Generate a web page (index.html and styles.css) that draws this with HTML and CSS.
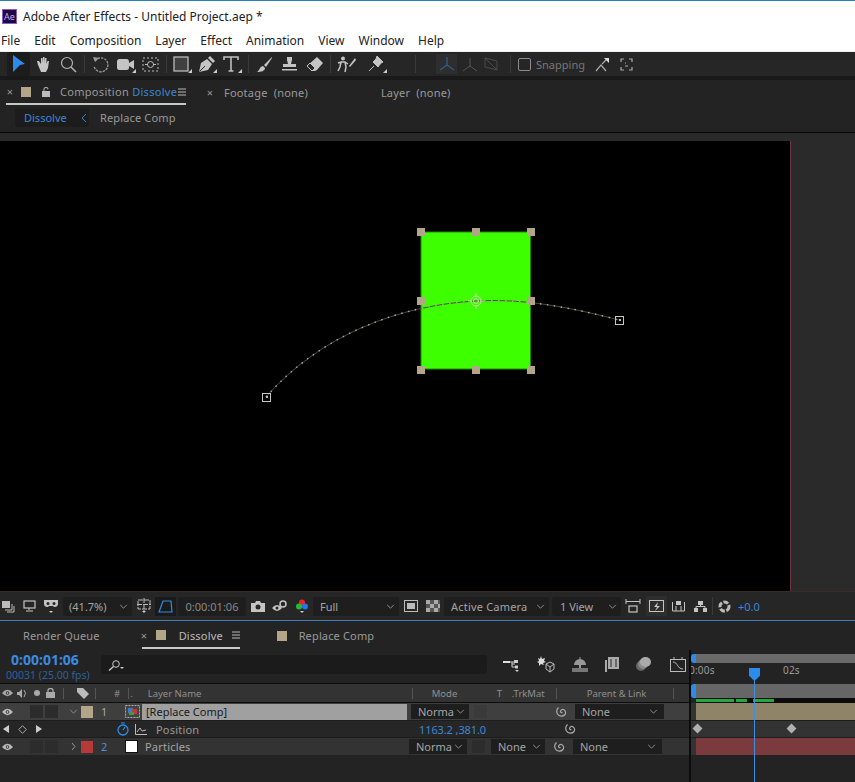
FILE: index.html
```html
<!DOCTYPE html>
<html lang="en">
<head>
    <meta charset="UTF-8">
    <meta name="viewport" content="width=device-width, initial-scale=1.0">
    <title>Adobe After Effects</title>
    <link rel="stylesheet" href="styles.css">
</head>
<body>

<!-- shared icons -->
<svg class="defs" width="0" height="0">
    <symbol id="chev" viewBox="0 0 10 6"><path d="M1 1l4 4 4-4" fill="none" stroke="currentColor"/></symbol>
    <symbol id="spiral" viewBox="0 0 14 14"><path d="M7.5 7.5a1.3 1.3 0 0 1-2-1 2.5 2.5 0 0 1 3-2 3.4 3.4 0 0 1 1.5 5 4.6 4.6 0 0 1-7.500-.500 5.400 5.400 0 0 1 1-6.500" fill="none" stroke="currentColor" stroke-width="1.200"/></symbol>
    <symbol id="eye" viewBox="0 0 12 8"><path d="M0 4q6-7 12 0q-6 7-12 0z" fill="currentColor"/><circle cx="6" cy="4" r="2" fill="#333"/><circle cx="6" cy="4" r="1" fill="currentColor"/></symbol>
    <symbol id="lines" viewBox="0 0 8 8"><path d="M0 1h8M0 4h8M0 7h8" stroke="currentColor"/></symbol>
    <symbol id="corner" viewBox="0 0 4 4"><path d="M4 0v4H0z" fill="currentColor"/></symbol>
</svg>

<div class="titlebar">
    <span class="ae-logo">Ae</span>
    <span class="app-title">Adobe After Effects - Untitled Project.aep *</span>
</div>

<nav class="menubar">
    <span>File</span><span>Edit</span><span>Composition</span><span>Layer</span><span>Effect</span><span>Animation</span><span>View</span><span>Window</span><span>Help</span>
</nav>

<!-- Tools -->
<div class="toolbar">
    <span class="tool selected"><svg width="13" height="18" viewBox="0 0 13 18"><path d="M1 0l12 9-5 1-7 7z" fill="#2d8ceb"/></svg></span>
    <span class="tool"><svg width="17" height="17" viewBox="0 0 17 17"><path d="M3 9L2 5l2 0 2 3V2h1.500l.5 5V1h1.500l.5 6V2h1.500v6l1-3h1.500l-1 7-2 4H6z" fill="#c6c6c6"/></svg></span>
    <span class="tool"><svg width="17" height="17" viewBox="0 0 17 17"><circle cx="7" cy="7" r="5.500" fill="none" stroke="#b4b4b4" stroke-width="1.200"/><path d="M11 11l5 5" stroke="#b4b4b4" stroke-width="1.500"/></svg></span>
    <i class="sep"></i>
    <span class="tool"><svg width="17" height="17" viewBox="0 0 17 17"><path d="M3 5a7 7 0 1 1-1 5" fill="none" stroke="#9c9c9c" stroke-width="1.300" stroke-dasharray="2.500 1"/><path d="M1 1l6 1-4 4z" fill="#9c9c9c"/></svg></span>
    <span class="tool"><svg width="20" height="17" viewBox="0 0 20 17"><rect x="1" y="3" width="12" height="11" rx="2.500" fill="#c4c4c4"/><path d="M13 7l5-3v9l-5-3z" fill="#c4c4c4"/><use href="#corner" x="16" y="13" width="4" height="4" color="#ccc"/></svg></span>
    <span class="tool"><svg width="17" height="17" viewBox="0 0 17 17"><rect x="1" y="2" width="15" height="13" fill="none" stroke="#bbb" stroke-dasharray="2 2"/><circle cx="8.500" cy="8.500" r="3" fill="none" stroke="#bbb"/><path d="M3 8.500h3M11 8.500h3" stroke="#bbb"/></svg></span>
    <i class="sep"></i>
    <span class="tool"><svg width="19" height="17" viewBox="0 0 19 17"><rect x="1" y="1" width="14" height="14" fill="#404040" stroke="#b8b8b8" stroke-width="1.300"/><use href="#corner" x="15" y="13" width="4" height="4" color="#ccc"/></svg></span>
    <span class="tool"><svg width="19" height="17" viewBox="0 0 19 17"><path d="M1 16l2-9 6-4 5 5-4 6z" fill="#c4c4c4"/><path d="M10 2l2-2 5 5-2 2z" fill="#c4c4c4"/><path d="M1.500 15.500L7 10" stroke="#262626"/><use href="#corner" x="15" y="13" width="4" height="4" color="#ccc"/></svg></span>
    <span class="tool"><svg width="19" height="17" viewBox="0 0 19 17"><path d="M1 4V1h14v3M8 1v14M5.500 15h5" fill="none" stroke="#c0c0c0" stroke-width="1.600"/><use href="#corner" x="15" y="13" width="4" height="4" color="#ccc"/></svg></span>
    <i class="sep"></i>
    <span class="tool"><svg width="17" height="17" viewBox="0 0 17 17"><path d="M16 1L8 9l2 2 6-9zM7 10c-3 0-3 4-6 6 4 0 8-1 8-4z" fill="#c4c4c4"/></svg></span>
    <span class="tool"><svg width="17" height="17" viewBox="0 0 17 17"><path d="M6 1h5v3l-1 4h5v3H2V8h5L6 4zM1 13h15v1.500H1z" fill="#c4c4c4"/></svg></span>
    <span class="tool"><svg width="18" height="17" viewBox="0 0 18 17"><path d="M11 1l6 6-6 7-2 1-3 0-5-5z" fill="#c4c4c4"/><path d="M1 10l5 5 3-3-5-5z" fill="#262626" stroke="#c4c4c4"/></svg></span>
    <i class="sep"></i>
    <span class="tool"><svg width="20" height="17" viewBox="0 0 20 17"><circle cx="6" cy="2.500" r="2" fill="#c4c4c4"/><path d="M4 6h4l1 5-1 5M4 6L3 11l-2 4M1 7l3-1M8 6l3 2" fill="none" stroke="#c4c4c4" stroke-width="1.500"/><path d="M18 2l-6 8 1 1 6-7z" fill="#c4c4c4"/></svg></span>
    <span class="tool tool-pin"><svg width="19" height="17" viewBox="0 0 19 17"><path d="M9 0l6 6-2 1-3 4-5-5 3-3zM6 10l-5 5" fill="#c4c4c4" stroke="#c4c4c4"/><use href="#corner" x="15" y="13" width="4" height="4" color="#ccc"/></svg></span>
    <i class="sep sep-axis"></i>
    <span class="axis-on"><svg width="18" height="16" viewBox="0 0 18 16"><path d="M9 1v8M9 9l-7 5M9 9l7 5" stroke="#2f5d8a" stroke-width="1.300" fill="none"/></svg></span>
    <span class="axis"><svg width="16" height="15" viewBox="0 0 16 15"><path d="M8 1v8M8 9l-7 5M8 9l7 5" stroke="#555" fill="none"/></svg></span>
    <span class="axis"><svg width="14" height="15" viewBox="0 0 14 15"><path d="M1 1l12 3v9L1 10zM1 1l12 12" stroke="#4a4a4a" fill="none"/></svg></span>
    <i class="sep"></i>
    <span class="snap-box"></span>
    <span class="snap-label">Snapping</span>
    <span class="snap-icon"><svg width="15" height="15" viewBox="0 0 15 15"><path d="M1 14l5-6 5 6M7 7l5-5" fill="none" stroke="#aaa" stroke-width="1.200"/><path d="M9 1h5v5z" fill="#ddd"/></svg></span>
    <span class="snap-icon"><svg width="13" height="13" viewBox="0 0 13 13"><path d="M1 4V1h3M9 1h3v3M12 9v3H9M4 12H1V9M5 5h1M8 5h0M5 8h3" fill="none" stroke="#aaa" stroke-width="1.200"/></svg></span>
</div>
<div class="tool-gap"></div>

<!-- Composition panel -->
<div class="panel-tabs">
    <span class="tab tab-comp">
        <span class="close">×</span>
        <i class="swatch tan"></i>
        <svg class="lock" width="8" height="10" viewBox="0 0 8 10"><path d="M0 4h8v6H0zM1.500 4V2a2.500 2 0 0 1 5 0" fill="#bbb"/><path d="M2.500 3.500V2a1.500 1 0 0 1 3 0v1.500" fill="#232323"/></svg>
        <span class="tab-text">Composition <b class="blue">Dissolve</b></span>
        <svg class="burger" width="8" height="8"><use href="#lines"/></svg>
    </span>
    <span class="tab tab-footage"><span class="close">×</span><span class="tab-text">Footage&nbsp; (none)</span></span>
    <span class="tab tab-layer"><span class="tab-text">Layer&nbsp; (none)</span></span>
</div>
<div class="crumbs">
    <span class="crumb-on">Dissolve <svg width="6" height="10" viewBox="0 0 6 10"><path d="M5 1L1 5l4 4" fill="none" stroke="#3a7fc8"/></svg></span>
    <span class="crumb">Replace Comp</span>
</div>

<div class="viewer">
    <div class="comp">
        <svg class="stage" width="790" height="450" viewBox="0 141 790 450">
            <rect x="421" y="232" width="109.500" height="137" fill="#3dff00" stroke="#1f8a0a"/>
            <path class="motion" d="M266 397C320 335 400 305 476 301C530 298 580 310 619 320"/>
            <path class="motion-dots" d="M266 397C320 335 400 305 476 301C530 298 580 310 619 320"/>
            <g class="handle">
                <rect x="417" y="228" width="8" height="8"/><rect x="472" y="228" width="8" height="8"/><rect x="527" y="228" width="8" height="8"/>
                <rect x="417" y="297" width="8" height="8"/><rect x="527" y="297" width="8" height="8"/>
                <rect x="417" y="366" width="8" height="8"/><rect x="472" y="366" width="8" height="8"/><rect x="527" y="366" width="8" height="8"/>
            </g>
            <g fill="none" stroke="#c8d8a8">
                <circle cx="476" cy="301" r="5"/><circle cx="476" cy="301" r="2.500"/>
                <path d="M476 293v4M476 305v4M468 301h4M480 301h4"/>
            </g>
            <g class="kf-box">
                <rect x="262.500" y="393.500" width="8" height="8"/><rect x="615.500" y="316.500" width="8" height="8"/>
            </g>
            <rect x="266" y="396" width="2" height="2" fill="#bbb"/><rect x="619" y="319" width="2" height="2" fill="#bbb"/>
        </svg>
    </div>
</div>

<div class="view-bar">
    <svg class="vb-first" width="14" height="13" viewBox="0 0 14 13"><path d="M1 1h8v7H1z" fill="#bbb"/><path d="M11 4v6H4M13 6v6H6" fill="none" stroke="#bbb"/></svg>
    <svg class="vb-mon" width="13" height="12" viewBox="0 0 13 12"><rect x="1" y="1" width="11" height="7" fill="none" stroke="#c4c4c4" stroke-width="1.200"/><path d="M6 8v2M3 11h7" stroke="#c4c4c4"/></svg>
    <svg class="vb-mask" width="16" height="15" viewBox="0 0 16 15"><path d="M1 1h14v4c0 3-4 4-5 2H6C5 9 1 8 1 5z" fill="#c4c4c4"/><circle cx="5" cy="4.500" r="1.500" fill="#262626"/><circle cx="11" cy="4.500" r="1.500" fill="#262626"/><path d="M6 12h4l-2 2z" fill="#ccc"/></svg>
    <span class="dd dd-zoom">(41.7%)<svg width="9" height="5"><use href="#chev"/></svg></span>
    <svg class="vb-grid" width="14" height="16" viewBox="0 0 14 16"><path d="M1 2h12v9H1zM7 0v13M0 6.500h14" fill="none" stroke="#bbb" stroke-dasharray="5 1"/><path d="M5 13h4l-2 2z" fill="#ccc"/></svg>
    <span class="mask-btn"><svg width="15" height="13" viewBox="0 0 15 13"><path d="M5 1h8l1 11H1z" fill="none" stroke="#2d8ceb" stroke-width="1.200"/></svg></span>
    <span class="dd dd-time">0:00:01:06</span>
    <svg class="vb-cam" width="14" height="11" viewBox="0 0 14 11"><path d="M0 2h4l1-2h4l1 2h4v9H0z" fill="#c4c4c4"/><circle cx="7" cy="6" r="2.500" fill="#262626"/></svg>
    <svg class="vb-snap" width="15" height="13" viewBox="0 0 15 13"><path d="M0 8q5-6 10 0q-5 6-10 0z" fill="#c4c4c4"/><circle cx="5" cy="8" r="1.500" fill="#262626"/><circle cx="11" cy="4" r="3" fill="none" stroke="#c4c4c4" stroke-width="1.500"/></svg>
    <svg class="vb-rgb" width="12" height="15" viewBox="0 0 12 15"><circle cx="6" cy="3.500" r="3" fill="#e22"/><circle cx="3" cy="7.500" r="3" fill="#2b3"/><circle cx="9" cy="7.500" r="3" fill="#27e"/><path d="M4 12h4l-2 2z" fill="#ccc"/></svg>
    <span class="dd dd-full">Full<svg width="9" height="5"><use href="#chev"/></svg></span>
    <svg class="vb-box" width="14" height="12" viewBox="0 0 14 12"><rect x=".5" y=".5" width="13" height="11" fill="none" stroke="#bbb"/><rect x="3" y="3" width="8" height="6" fill="#bbb"/></svg>
    <svg class="vb-check" width="14" height="12" viewBox="0 0 14 12"><rect width="14" height="12" fill="#555"/><path d="M0 0h4v4H0zM8 0h4v4H8zM4 4h4v4H4zM12 4h2v4h-2zM0 8h4v4H0zM8 8h4v4H8z" fill="#aaa"/></svg>
    <span class="dd dd-cam">Active Camera<svg width="9" height="5"><use href="#chev"/></svg></span>
    <span class="dd dd-view">1 View<svg width="9" height="5"><use href="#chev"/></svg></span>
    <svg class="vb-res" width="16" height="14" viewBox="0 0 16 14"><path d="M1 0v5M15 0v5M1 2.500h14" stroke="#c4c4c4"/><rect x="4" y="7" width="8" height="6" fill="none" stroke="#c4c4c4" stroke-width="1.200"/></svg>
    <span class="fast-btn"><svg width="15" height="13" viewBox="0 0 15 13"><rect x=".5" y=".5" width="14" height="11" fill="none" stroke="#c4c4c4"/><path d="M9 2L5 7h3l-2 4 5-5H8z" fill="#c4c4c4"/></svg></span>
    <svg class="vb-flow1" width="13" height="11" viewBox="0 0 13 11"><path d="M.5 1v9h12V1M4 10V5M9 10V5" fill="none" stroke="#c4c4c4"/><rect x="4" y="0" width="5" height="4" fill="#c4c4c4"/></svg>
    <svg class="vb-flow2" width="13" height="11" viewBox="0 0 13 11"><rect x="4" y="0" width="5" height="4" fill="#c4c4c4"/><rect x="0" y="7" width="4" height="4" fill="#c4c4c4"/><rect x="9" y="7" width="4" height="4" fill="#c4c4c4"/><path d="M6.500 4v2M2 7V5.500h9V7" fill="none" stroke="#c4c4c4"/></svg>
    <i class="sep sep-view"></i>
    <svg class="vb-shutter" width="13" height="13" viewBox="0 0 13 13"><circle cx="6.500" cy="6.500" r="4.500" fill="none" stroke="#bbb" stroke-width="3" stroke-dasharray="5 1.500"/></svg>
    <span class="exposure">+0.0</span>
</div>

<!-- Timeline panel -->
<div class="tl-tabs">
    <span class="tl-tab tl-render">Render Queue</span>
    <span class="tl-tab tl-active">
        <span class="close">×</span><i class="swatch tan"></i><span class="tl-name">Dissolve</span>
        <svg width="8" height="8"><use href="#lines"/></svg>
    </span>
    <span class="tl-tab tl-replace"><i class="swatch tan"></i><span class="tl-name">Replace Comp</span></span>
</div>

<div class="timeline">
    <div class="tl-left">
        <div class="time-row">
            <div class="timecode">
                <div class="tc-main">0:00:01:06</div>
                <div class="tc-sub">00031 (25.00 fps)</div>
            </div>
            <div class="search"><svg width="17" height="11" viewBox="0 0 17 11"><circle cx="8" cy="4" r="3.300" fill="none" stroke="#ccc"/><path d="M5.500 6.500L1 10.500" stroke="#ccc" stroke-width="1.300"/><path d="M12 7h4l-2 2z" fill="#ccc"/></svg></div>
            <div class="tl-icons">
                <svg width="17" height="15" viewBox="0 0 17 15"><path d="M0 4h7v2H0z" fill="#ddd"/><path d="M7 5h4M9 5v5h3M9 7h3" fill="none" stroke="#ccc"/><rect x="11" y="3" width="4" height="3" fill="#ccc"/><rect x="12" y="8.500" width="3" height="3" fill="#ccc"/><path d="M12 13h4l-2 2z" fill="#ccc"/></svg>
                <svg width="18" height="17" viewBox="0 0 18 17"><path d="M4 0l1 3 3-1-1 3 2 1-3 1 1 2-3-1-2 2v-3L0 6l2-1-1-3 2 1z" fill="#ddd"/><path d="M13 6l4 2v5l-4 3-4-3V8zM9 8l4 3 4-3M13 11v5" fill="none" stroke="#bbb"/></svg>
                <svg width="16" height="15" viewBox="0 0 16 15"><path d="M2 8a6 6 0 0 1 12 0z" fill="#999"/><rect x="7" y="8" width="2" height="3" fill="#999"/><rect y="11" width="16" height="4" fill="#777"/><path d="M8 0v2" stroke="#999"/></svg>
                <svg width="14" height="15" viewBox="0 0 14 15"><rect x="3" y="0" width="11" height="12" fill="#aaa"/><rect x="0" y="3" width="2" height="12" fill="#aaa"/><path d="M6 2v8M11 2v8" stroke="#262626"/></svg>
                <svg width="15" height="14" viewBox="0 0 15 14"><ellipse cx="5" cy="9" rx="5" ry="5" fill="#666"/><ellipse cx="7" cy="7" rx="5" ry="5" fill="#888"/><ellipse cx="9.500" cy="5" rx="5.500" ry="5" fill="#aaa"/></svg>
                <svg class="graph-icon" width="16" height="15" viewBox="0 0 16 15"><rect x=".5" y="2.500" width="15" height="12" fill="none" stroke="#bbb"/><path d="M3 5c5 0 4 7 10 7M4 0v2M12 0v2" fill="none" stroke="#bbb"/></svg>
            </div>
        </div>

        <div class="row row-head">
            <span class="sw-icons">
                <svg width="11" height="8"><use href="#eye" color="#aaa"/></svg>
                <svg width="11" height="11" viewBox="0 0 11 11"><path d="M0 4h2l3-3v9L2 7H0z" fill="#aaa"/><path d="M7 2q3 3 0 7" fill="none" stroke="#aaa"/></svg>
                <i class="dot"></i>
                <svg width="9" height="10" viewBox="0 0 9 10"><path d="M0 4h9v6H0z" fill="#aaa"/><path d="M2 4V2.500a2.500 2 0 0 1 5 0V4" fill="none" stroke="#aaa" stroke-width="1.300"/></svg>
            </span>
            <i class="col-line l63"></i>
            <svg class="tag" width="12" height="11" viewBox="0 0 12 11"><path d="M0 0h6l6 6-5 5-7-7z" fill="#bbb"/></svg>
            <i class="col-line l95"></i>
            <span class="h-num">#</span><span class="h-dot">.</span>
            <i class="col-line l128"></i>
            <span class="h-name">Layer Name</span>
            <i class="col-line l412"></i>
            <span class="h-mode">Mode</span>
            <span class="h-t">T</span>
            <span class="h-trk">.TrkMat</span>
            <i class="col-line l556"></i>
            <span class="h-parent">Parent &amp; Link</span>
            <i class="col-line l673"></i>
        </div>

        <div class="row row-layer row-sel">
            <svg class="r-eye" width="11" height="8"><use href="#eye" color="#bbb"/></svg>
            <i class="cell c30"></i><i class="cell c45"></i>
            <svg class="twirl" width="9" height="5"><use href="#chev" color="#999"/></svg>
            <i class="label tan"></i>
            <span class="num">1</span>
            <svg class="comp-icon" width="15" height="13" viewBox="0 0 15 13"><rect x=".5" y=".5" width="14" height="12" fill="#444" stroke="#aaa" stroke-dasharray="2 1"/><rect x="3" y="3" width="5" height="5" fill="#3a7ec8"/><rect x="7" y="4" width="5" height="5" fill="#c03a3a"/><rect x="4" y="7" width="5" height="3" fill="#3c9a44"/></svg>
            <span class="name-sel">[Replace Comp]</span>
            <span class="mode-box">Norma<svg width="9" height="5"><use href="#chev"/></svg></span>
            <i class="t-box"></i>
            <svg class="pick" width="14" height="14"><use href="#spiral"/></svg>
            <span class="parent-box">None<svg width="9" height="5"><use href="#chev"/></svg></span>
        </div>

        <div class="row row-prop">
            <span class="kf-nav">
                <svg width="6" height="8" viewBox="0 0 6 8"><path d="M6 0v8L0 4z" fill="#ccc"/></svg>
                <svg width="9" height="9" viewBox="0 0 9 9"><path d="M4.500.7l3.800 3.800-3.800 3.800L.7 4.500z" fill="none" stroke="#aaa"/></svg>
                <svg width="6" height="8" viewBox="0 0 6 8"><path d="M0 0v8l6-4z" fill="#ccc"/></svg>
            </span>
            <svg class="stopwatch" width="12" height="14" viewBox="0 0 12 14"><circle cx="6" cy="8" r="5" fill="none" stroke="#2d8ceb" stroke-width="1.300"/><path d="M4 1h4M6 8l2-3" stroke="#2d8ceb" stroke-width="1.200"/></svg>
            <svg class="graph" width="12" height="11" viewBox="0 0 12 11"><path d="M.5 0v10.500H12M2 8l3-4 2 3 4-1" fill="none" stroke="#bbb"/></svg>
            <span class="prop-name">Position</span>
            <span class="prop-val">1163.2 ,381.0</span>
            <svg class="pick2" width="14" height="14"><use href="#spiral"/></svg>
        </div>

        <div class="row row-layer">
            <svg class="r-eye" width="11" height="8"><use href="#eye" color="#bbb"/></svg>
            <i class="cell c30"></i><i class="cell c45"></i>
            <svg class="twirl-r" width="5" height="9" viewBox="0 0 5 9"><path d="M1 1l3 3.500L1 8" fill="none" stroke="#999"/></svg>
            <i class="label red"></i>
            <span class="num num2">2</span>
            <i class="solid"></i>
            <span class="layer-name">Particles</span>
            <span class="mode-box">Norma<svg width="9" height="5"><use href="#chev"/></svg></span>
            <i class="t-box"></i>
            <span class="trk-box">None<svg width="9" height="5"><use href="#chev"/></svg></span>
            <svg class="pick pick3" width="14" height="14"><use href="#spiral"/></svg>
            <span class="parent-box">None<svg width="9" height="5"><use href="#chev"/></svg></span>
        </div>
    </div>

    <div class="tl-right">
        <div class="nav-bar"><i class="nav-handle"></i></div>
        <div class="ruler">
            <span class="rule-a">0:00s</span><span class="rule-b">02s</span>
        </div>
        <div class="work-bar"><i class="nav-handle work-handle"></i></div>
        <div class="cache"><i class="c1"></i><i class="c2"></i><i class="c3"></i></div>
        <div class="track"><div class="bar bar-tan"></div></div>
        <div class="track track-kf"><i class="kf k1"></i><i class="kf k2"></i></div>
        <div class="track"><div class="bar bar-red"></div></div>
        <div class="cti"><i class="cti-head"></i></div>
    </div>
</div>

</body>
</html>
```

FILE: styles.css
```css
* {
    box-sizing: border-box;
}

html, body {
    margin: 0;
    padding: 0;
    height: 782px;
    overflow: hidden;
}

body {
    font-family: "Noto Sans", Arial, sans-serif;
    font-size: 11px;
    background-color: #232323;
    color: #9a9a9a;
}

svg {
    display: block;
    flex: none;
}

i {
    display: block;
    flex: none;
}

.defs {
    position: absolute;
}

.blue {
    color: #3d86d2;
    font-weight: normal;
}

/* Window chrome */
.titlebar {
    height: 31px;
    background-color: white;
    border-top: 1px solid #2a7fba;
    display: flex;
    align-items: center;
    padding-left: 2px;
    color: #222;
}

.ae-logo {
    width: 15px;
    height: 15px;
    background-color: #1f0a3c;
    border: 1px solid #8a5cc8;
    color: #c9a8ff;
    font-size: 9px;
    line-height: 13px;
    text-align: center;
}

.app-title {
    margin-left: 6px;
    font-size: 12px;
}

.menubar {
    height: 20px;
    background-color: white;
    color: #222;
    display: flex;
    gap: 14px;
    padding-left: 1px;
    font-size: 12px;
    line-height: 20px;
}

/* Tools */
.toolbar {
    height: 25px;
    background-color: #262626;
    display: flex;
    align-items: center;
    padding-left: 6px;
    border-top: 1px solid #f0f0f0;
}

.tool {
    width: 25px;
    height: 24px;
    display: flex;
    align-items: center;
    justify-content: center;
}

.tool.selected {
    background-color: #1c1c1c;
    border-radius: 3px;
    margin-left: 1px;
    width: 23px;
    margin-right: 1px;
}

.tool-pin {
    margin-left: 6px;
}

.sep {
    width: 1px;
    height: 18px;
    margin: 0 3px;
    background-color: #3a3a3a;
}

.sep-axis {
    margin-left: 25px;
    margin-right: 20px;
}

.axis-on {
    width: 21px;
    height: 20px;
    background-color: #2e2e2e;
    display: flex;
    align-items: center;
    justify-content: center;
}

.axis {
    margin-left: 5px;
    margin-right: 0;
}

.axis + .axis {
    margin-left: 6px;
    margin-right: 9px;
}

.snap-box {
    width: 13px;
    height: 13px;
    border: 1.500px solid #8c8c8c;
    border-radius: 2px;
    margin-left: 4px;
}

.snap-label {
    margin-left: 5px;
    color: #777;
    font-size: 11px;
}

.snap-icon {
    margin-left: 10px;
}

.tool-gap {
    height: 4px;
    background-color: #191919;
}

/* Composition panel */
.panel-tabs {
    height: 25px;
    display: flex;
    align-items: center;
    position: relative;
}

.tab {
    display: flex;
    align-items: center;
    height: 25px;
}

.tab-comp {
    width: 180px;
    margin-left: 6px;
    border-bottom: 2px solid #c8c8c8;
}

.close {
    color: #999;
    font-size: 11px;
    width: 8px;
    text-align: center;
}

.swatch {
    width: 10px;
    height: 10px;
}

.tan {
    background-color: #b3a58a;
}

.red {
    background-color: #b73a3a;
}

.lock {
    margin-left: 11px;
}

.tab-comp .swatch {
    margin-left: 7px;
}

.tab-comp .tab-text {
    margin-left: 10px;
    width: 108px;
    letter-spacing: .3px;
    white-space: nowrap;
}

.burger {
    margin-left: 10px;
    color: #bbb;
}

.tab-footage {
    margin-left: 20px;
}

.tab-footage .tab-text {
    margin-left: 10px;
    letter-spacing: .2px;
}

.tab-layer {
    margin-left: 73px;
}

.tab-layer .tab-text {
    letter-spacing: .2px;
}

.crumbs {
    height: 28px;
    display: flex;
    align-items: center;
    padding: 0 0 2px 15px;
    border-bottom: 1px solid #050505;
}

.crumb-on {
    width: 74px;
    height: 18px;
    background-color: #1c1c1c;
    border-radius: 2px;
    color: #3d86d2;
    padding-left: 9px;
    display: flex;
    align-items: center;
    justify-content: space-between;
    padding-right: 2px;
}

.crumb {
    margin-left: 11px;
    letter-spacing: .15px;
}

/* Viewer */
.viewer {
    height: 458px;
    padding-top: 8px;
    background-color: #2a2a2a;
}

.comp {
    width: 791px;
    height: 450px;
    background-color: black;
    border-right: 1px solid #6b3442;
}

.motion {
    fill: none;
    stroke: #4d4a40;
    stroke-width: 1;
}

.motion-dots {
    fill: none;
    stroke: #b3a58a;
    stroke-width: 1.500;
    stroke-dasharray: 1.500 5.500;
}

.handle {
    fill: #b3a58a;
}

.kf-box {
    fill: none;
    stroke: #c8c8c8;
}

.view-bar {
    height: 30px;
    background-color: #262626;
    border-top: 1px solid #3a2a2a;
    border-bottom: 1px solid #3f7fb8;
    display: flex;
    align-items: center;
    padding-left: 1px;
}

.dd {
    height: 19px;
    background-color: #1e1e1e;
    border-radius: 3px;
    display: flex;
    align-items: center;
    justify-content: space-between;
    padding: 0 4px 0 6px;
    color: #a5a5a5;
}

.vb-mon {
    margin-left: 8px;
}

.vb-mask {
    margin-left: 7px;
}

.dd-zoom {
    width: 69px;
    margin-left: 4px;
}

.vb-grid {
    margin-left: 5px;
}

.mask-btn {
    width: 21px;
    height: 19px;
    margin-left: 4px;
    background-color: #1a1a1a;
    display: flex;
    align-items: center;
    justify-content: center;
}

.dd-time {
    width: 68px;
    margin-left: 2px;
    justify-content: center;
    padding: 0;
    color: #8a8a8a;
}

.vb-cam {
    margin-left: 5px;
}

.vb-snap {
    margin-left: 7px;
}

.vb-rgb {
    margin-left: 9px;
}

.dd-full {
    width: 86px;
    margin-left: 5px;
    padding-left: 7px;
}

.vb-box {
    margin-left: 5px;
}

.vb-check {
    margin-left: 8px;
}

.dd-cam {
    width: 105px;
    margin-left: 4px;
    padding-left: 7px;
    letter-spacing: .2px;
}

.dd-view {
    width: 69px;
    margin-left: 3px;
    padding-left: 8px;
}

.vb-res {
    margin-left: 4px;
}

.fast-btn {
    width: 21px;
    height: 20px;
    margin-left: 5px;
    background-color: #2e2e2e;
    display: flex;
    align-items: center;
    justify-content: center;
}

.vb-flow1 {
    margin-left: 5px;
}

.vb-flow2 {
    margin-left: 9px;
}

.sep-view {
    margin: 0 5px;
}

.exposure {
    margin-left: 7px;
    color: #3d86d2;
}

/* Timeline panel */
.tl-tabs {
    height: 29px;
    display: flex;
    align-items: center;
}

.tl-render {
    margin-left: 23px;
    letter-spacing: .15px;
}

.tl-tab {
    display: flex;
    align-items: center;
}

.tl-active {
    margin-left: 42px;
    width: 98px;
    height: 25px;
    margin-top: 1px;
    border-bottom: 2px solid #c8c8c8;
    color: #bbb;
}

.tl-active .close {
    width: 6px;
    margin-left: -1px;
}

.tl-active .swatch {
    margin-left: 9px;
}

.tl-active .tl-name {
    margin-left: 13px;
    width: 53px;
    letter-spacing: .2px;
}

.tl-replace {
    margin-left: 37px;
}

.tl-replace .tl-name {
    margin-left: 12px;
    letter-spacing: .15px;
}

.timeline {
    display: flex;
    height: 132px;
}

.tl-left {
    width: 689px;
    border-right: 0;
}

.time-row {
    height: 34px;
    display: flex;
    border-bottom: 1px solid #0c0c0c;
    position: relative;
}

.timecode {
    width: 101px;
    padding-left: 6px;
}

.tc-main {
    color: #3d8ae0;
    font-size: 14px;
    font-weight: bold;
    line-height: 18px;
    padding-left: 5px;
    margin-top: 1px;
}

.tc-sub {
    color: #2d6299;
    font-size: 10.500px;
    line-height: 12px;
    white-space: nowrap;
}

.search {
    width: 386px;
    height: 19px;
    margin-top: 5px;
    background-color: #1b1b1b;
    border-radius: 3px;
    padding: 5px 0 0 7px;
}

.tl-icons {
    display: flex;
    align-items: center;
    padding-left: 16px;
    gap: 17px;
    height: 28px;
}

.graph-icon {
    margin-left: 2px;
}

.row {
    position: relative;
    display: flex;
    align-items: center;
    height: 18px;
}

.row-head {
    height: 18px;
    background-color: #333333;
    border-bottom: 1px solid #0c0c0c;
    font-size: 9.500px;
    color: #8f8f8f;
    height: 19px;
}

.sw-icons {
    display: flex;
    align-items: center;
    gap: 4px;
    padding-left: 2px;
    width: 63px;
}

.dot {
    width: 6px;
    height: 6px;
    border-radius: 50%;
    background-color: #aaa;
    margin: 0 2px;
}

.col-line {
    position: absolute;
    top: 4px;
    height: 11px;
    width: 1px;
    background-color: #555;
}

.l63 { left: 63px; }
.l95 { left: 95px; }
.l128 { left: 128px; }
.l412 { left: 412px; }
.l556 { left: 556px; }
.l673 { left: 673px; }

.tag {
    margin-left: 14px;
}

.h-num {
    margin-left: 25px;
}

.h-dot {
    margin-left: 10px;
}

.h-name {
    margin-left: 15px;
    width: 279px;
}

.h-mode {
    margin-left: 5px;
    width: 65px;
}

.h-t {
    width: 15px;
}

.h-trk {
    width: 68px;
}

.h-parent {
    margin-left: 7px;
}

.row-layer {
    background-color: #333333;
    height: 17px;
}

.row-sel {
    background-color: #3f3f3f;
}

.row-prop {
    background-color: #262626;
    height: 18px;
    border-top: 1px solid #1c1c1c;
    border-bottom: 1px solid #1c1c1c;
}

.r-eye {
    margin-left: 2px;
}

.cell {
    width: 13px;
    height: 13px;
    background-color: #2c2c2c;
}

.c30 {
    margin-left: 17px;
}

.c45 {
    margin-left: 2px;
}

.twirl {
    margin-left: 11px;
}

.twirl-r {
    margin-left: 13px;
}

.label {
    width: 12px;
    height: 12px;
    margin-left: 3px;
}

.row-layer .twirl-r + .label {
    margin-left: 5px;
}

.num {
    width: 8px;
    margin-left: 8px;
    color: #a5a5a5;
}

.num2 {
    color: #4d90d8;
}

.comp-icon {
    margin-left: 16px;
}

.name-sel {
    width: 265px;
    height: 16px;
    line-height: 15px;
    margin-left: 2px;
    padding-left: 4px;
    background-color: #a0a0a0;
    color: #1a1a1a;
}

.mode-box {
    width: 58px;
    height: 15px;
    margin-left: 4px;
    background-color: #1e1e1e;
    color: #a5a5a5;
    display: flex;
    align-items: center;
    justify-content: space-between;
    padding: 0 4px 0 7px;
}

.t-box {
    width: 13px;
    height: 13px;
    margin-left: 5px;
    background-color: #3a3a3a;
}

.row-layer:not(.row-sel) .t-box {
    background-color: #2c2c2c;
}

.pick {
    margin-left: 68px;
    color: #aaa;
}

.pick3 {
    margin-left: 8px;
}

.parent-box {
    width: 89px;
    height: 15px;
    margin-left: 6px;
    background-color: #1e1e1e;
    color: #a5a5a5;
    display: flex;
    align-items: center;
    justify-content: space-between;
    padding: 0 6px 0 7px;
}

.trk-box {
    width: 54px;
    height: 15px;
    margin-left: 6px;
    background-color: #1e1e1e;
    color: #a5a5a5;
    display: flex;
    align-items: center;
    justify-content: space-between;
    padding: 0 4px 0 7px;
}

.kf-nav {
    display: flex;
    align-items: center;
    gap: 9px;
    padding-left: 3px;
    width: 116px;
}

.stopwatch {
    margin-left: 1px;
}

.graph {
    margin-left: 6px;
}

.prop-name {
    margin-left: 9px;
    width: 263px;
    letter-spacing: .2px;
}

.prop-val {
    color: #3d86d2;
    width: 112px;
    letter-spacing: -.1px;
    white-space: nowrap;
}

.pick2 {
    margin-left: 33px;
    color: #aaa;
}

.solid {
    width: 13px;
    height: 13px;
    margin-left: 16px;
    background-color: white;
    border: 1px solid #111;
}

.layer-name {
    margin-left: 7px;
    width: 260px;
    color: #a5a5a5;
    letter-spacing: .2px;
}

/* Timeline right side */
.tl-right {
    position: relative;
    flex: 1;
    border-left: 2px solid #0c0c0c;
    overflow: hidden;
}

.nav-bar {
    height: 9px;
    margin-top: 4px;
    margin-left: 5px;
    background-color: #6a6a6a;
    position: relative;
}

.nav-handle {
    position: absolute;
    left: -5px;
    top: 0;
    width: 5px;
    height: 100%;
    background-color: #2d8ceb;
    border-radius: 3px 0 0 3px;
}

.ruler {
    height: 21px;
    position: relative;
    font-size: 10px;
    line-height: 14px;
}

.rule-a {
    position: absolute;
    left: -2px;
    top: 0;
    letter-spacing: .2px;
}

.rule-b {
    position: absolute;
    left: 92px;
    top: 0;
    letter-spacing: .2px;
}

.work-bar {
    height: 14px;
    margin-left: 5px;
    background-color: #666;
    position: relative;
}

.cache {
    height: 5px;
    background-color: #0c0c0c;
    margin-left: 5px;
    position: relative;
}

.cache i {
    position: absolute;
    top: 1px;
    height: 3px;
    background-color: #22a83c;
}

.cache .c1 { left: 0; width: 38px; }
.cache .c2 { left: 40px; width: 11px; }
.cache .c3 { left: 57px; width: 21px; }

.track {
    height: 17px;
    padding-left: 5px;
    background-color: #333333;
}

.track-kf {
    height: 18px;
    background-color: #333333;
    position: relative;
    border-top: 1px solid #1c1c1c;
    border-bottom: 1px solid #1c1c1c;
}

.bar {
    height: 100%;
}

.bar-tan {
    background-color: #8f8468;
}

.bar-red {
    background-color: #7b3a3d;
}

.kf {
    position: absolute;
    top: 4px;
    width: 7px;
    height: 7px;
    background-color: #b0b0b0;
    transform: rotate(45deg);
}

.k1 { left: 3px; }
.k2 { left: 97px; }

.cti {
    position: absolute;
    left: 63px;
    top: 18px;
    bottom: 0;
    width: 1px;
    background-color: #3f8fe0;
}

.cti-head {
    position: absolute;
    left: -5px;
    top: 0;
    width: 11px;
    height: 13px;
    background-color: #2d8ceb;
    clip-path: polygon(0 0, 100% 0, 100% 60%, 50% 100%, 0 60%);
}
```
